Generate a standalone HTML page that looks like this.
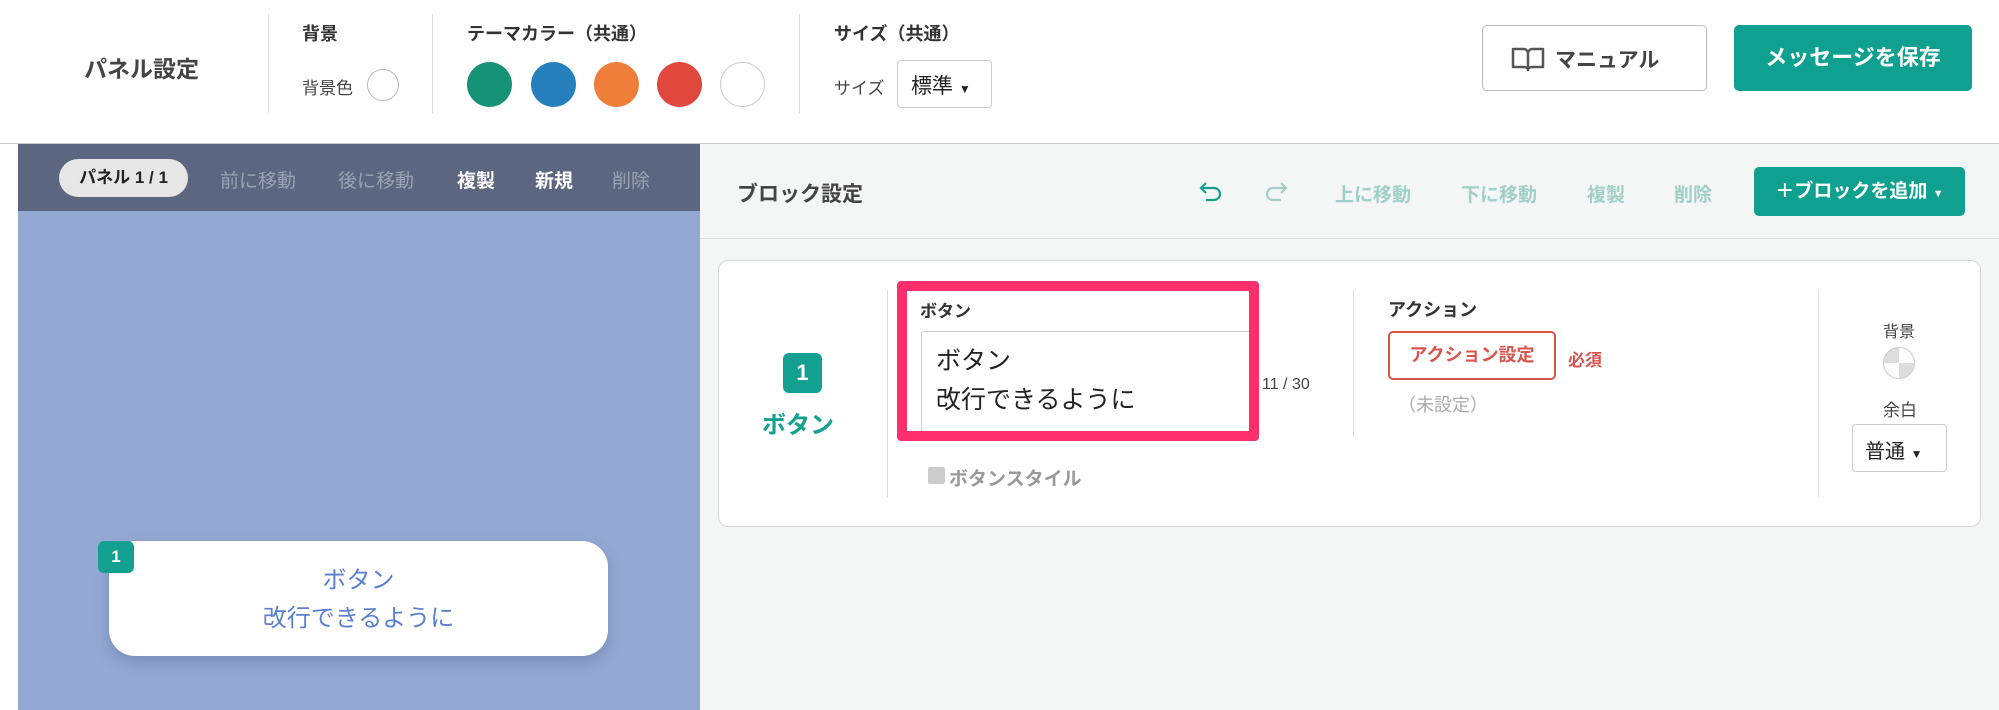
<!DOCTYPE html>
<html><head><meta charset="utf-8"><style>
*{box-sizing:border-box;margin:0;padding:0}
body{width:1999px;height:710px;overflow:hidden;background:#fff;font-family:"Liberation Sans","Noto Sans CJK JP",sans-serif;color:#333;position:relative}
.a{position:absolute;white-space:nowrap}
.vl{position:absolute;width:1px;background:#ddd}
.c{position:absolute;border-radius:50%;width:45px;height:45px;top:62px}
.t{font-size:19px;font-weight:bold;color:#fff;top:166px}
.g{font-size:19px;font-weight:bold;color:#9fd0c8;top:180px}
</style></head><body>
<div class="a" style="left:84px;top:50px;font-size:23px;font-weight:bold;color:#444">パネル設定</div>
<div class="vl" style="left:268px;top:14px;height:99px"></div>
<div class="a" style="left:302px;top:20px;font-size:18px;font-weight:bold">背景</div>
<div class="a" style="left:302px;top:74px;font-size:17px;color:#444">背景色</div>
<div class="a" style="left:367px;top:69px;width:32px;height:32px;border:1px solid #bbb;border-radius:50%"></div>
<div class="vl" style="left:432px;top:14px;height:99px"></div>
<div class="a" style="left:467px;top:20px;font-size:18px;font-weight:bold">テーマカラー（共通）</div>
<div class="c" style="left:467px;background:#169277"></div>
<div class="c" style="left:531px;background:#2580bd"></div>
<div class="c" style="left:594px;background:#ee7e3a"></div>
<div class="c" style="left:657px;background:#e1483d"></div>
<div class="c" style="left:720px;border:1px solid #ccc"></div>
<div class="vl" style="left:799px;top:14px;height:99px"></div>
<div class="a" style="left:834px;top:20px;font-size:18px;font-weight:bold">サイズ（共通）</div>
<div class="a" style="left:834px;top:74px;font-size:17px;color:#444">サイズ</div>
<div class="a" style="left:897px;top:60px;width:95px;height:48px;border:1px solid #ccc;border-radius:4px;font-size:21px;padding:9px 0 0 13px;color:#222">標準 <span style="font-size:12px">▼</span></div>
<div class="a" style="left:1482px;top:25px;width:225px;height:66px;border:1px solid #bbb;border-radius:5px;font-size:21px;font-weight:bold;color:#444;padding:18px 0 0 28px">
<svg width="34" height="26" viewBox="0 0 34 26" style="vertical-align:-5px;margin-right:10px"><path d="M2 3h11c2 0 4 2 4 4v17c0-2-2-3-4-3H2zM32 3H21c-2 0-4 2-4 4v17c0-2 2-3 4-3h11z" fill="none" stroke="#555" stroke-width="2.5" stroke-linejoin="round"/></svg>マニュアル</div>
<div class="a" style="left:1734px;top:25px;width:238px;height:66px;background:#0fa090;border-radius:5px;font-size:22px;font-weight:bold;color:#fff;text-align:center;line-height:66px">メッセージを保存</div>
<div class="a" style="left:0;top:143px;width:1999px;height:1px;background:#ccc"></div>
<div class="a" style="left:18px;top:144px;width:682px;height:67px;background:#5c6680"></div>
<div class="a" style="left:18px;top:211px;width:682px;height:499px;background:#93a9d3"></div>
<div class="a" style="left:59px;top:159px;width:129px;height:38px;border-radius:19px;background:#e6e6e6;font-size:17px;font-weight:bold;color:#222;text-align:center;line-height:38px">パネル 1 / 1</div>
<div class="a" style="left:220px;top:166px;font-size:19px;color:#9aa2b5">前に移動</div>
<div class="a" style="left:338px;top:166px;font-size:19px;color:#9aa2b5">後に移動</div>
<div class="a t" style="left:457px">複製</div>
<div class="a t" style="left:535px">新規</div>
<div class="a" style="left:612px;top:166px;font-size:19px;color:#9aa2b5">削除</div>
<div class="a" style="left:109px;top:541px;width:499px;height:115px;background:#fff;border-radius:26px;box-shadow:0 6px 14px rgba(60,80,120,.3);text-align:center;color:#5b7fd0;font-size:24px;line-height:38px;padding-top:21px">ボタン<br>改行できるように</div>
<div class="a" style="left:98px;top:541px;width:36px;height:32px;background:#14a091;border-radius:6px;color:#fff;font-weight:bold;font-size:17px;text-align:center;line-height:32px">1</div>
<div class="a" style="left:700px;top:144px;width:1299px;height:566px;background:#f4f5f5"></div>
<div class="a" style="left:700px;top:238px;width:1299px;height:1px;background:#ddd"></div>
<div class="a" style="left:737px;top:178px;font-size:21px;font-weight:bold;color:#444">ブロック設定</div>
<svg class="a" style="left:1198px;top:180px" width="26" height="26" viewBox="0 0 26 26"><path d="M4 8h12a6 6 0 0 1 0 12h-8M8 3L3 8l5 5" fill="none" stroke="#14a091" stroke-width="2.2"/></svg>
<svg class="a" style="left:1263px;top:180px" width="26" height="26" viewBox="0 0 26 26"><path d="M22 8H10a6 6 0 0 0 0 12h8M18 3l5 5-5 5" fill="none" stroke="#9fd0c8" stroke-width="2.2"/></svg>
<div class="a g" style="left:1335px">上に移動</div>
<div class="a g" style="left:1461px">下に移動</div>
<div class="a g" style="left:1587px">複製</div>
<div class="a g" style="left:1674px">削除</div>
<div class="a" style="left:1754px;top:167px;width:211px;height:49px;background:#0fa090;border-radius:5px;color:#fff;font-weight:bold;font-size:19px;text-align:center;line-height:49px">＋ブロックを追加 <span style="font-size:11px">▼</span></div>
<div class="a" style="left:718px;top:260px;width:1263px;height:267px;background:#fff;border:1px solid #d5d5d5;border-radius:10px"></div>
<div class="a" style="left:783px;top:353px;width:39px;height:40px;background:#14a091;border-radius:6px;color:#fff;font-weight:bold;font-size:22px;text-align:center;line-height:40px">1</div>
<div class="a" style="left:762px;top:405px;font-size:24px;font-weight:bold;color:#14a091">ボタン</div>
<div class="vl" style="left:887px;top:290px;height:207px"></div>
<div class="a" style="left:921px;top:331px;width:338px;height:105px;border:1px solid #ccc;border-radius:3px;font-size:25px;color:#222;padding:10px 0 0 14px;line-height:39px">ボタン<br>改行できるように</div>
<div class="a" style="left:897px;top:281px;width:362px;height:160px;border:10px solid #ff2f6e;border-radius:4px"></div>
<div class="a" style="left:920px;top:297px;font-size:17px;font-weight:bold;color:#333">ボタン</div>
<div class="a" style="left:1262px;top:376px;font-size:16px;color:#444">11 / 30</div>
<div class="a" style="left:928px;top:467px;width:17px;height:17px;background:#ccc;border-radius:2px"></div>
<div class="a" style="left:949px;top:464px;font-size:19px;font-weight:bold;color:#999">ボタンスタイル</div>
<div class="vl" style="left:1353px;top:290px;height:147px"></div>
<div class="a" style="left:1388px;top:296px;font-size:18px;font-weight:bold;color:#333">アクション</div>
<div class="a" style="left:1388px;top:331px;width:168px;height:49px;border:2px solid #d9534f;border-radius:5px;color:#d9534f;font-weight:bold;font-size:18px;text-align:center;line-height:45px">アクション設定</div>
<div class="a" style="left:1568px;top:346px;font-size:17px;font-weight:bold;color:#d9534f">必須</div>
<div class="a" style="left:1398px;top:391px;font-size:18px;color:#aaa">（未設定）</div>
<div class="vl" style="left:1818px;top:290px;height:207px"></div>
<div class="a" style="left:1883px;top:318px;font-size:16px;color:#444">背景</div>
<div class="a" style="left:1883px;top:347px;width:32px;height:32px;border-radius:50%;border:1px solid #ccc;background:conic-gradient(#fff 0 90deg,#ddd 90deg 180deg,#fff 180deg 270deg,#ddd 270deg)"></div>
<div class="a" style="left:1883px;top:396px;font-size:17px;color:#444">余白</div>
<div class="a" style="left:1852px;top:424px;width:95px;height:48px;border:1px solid #ccc;border-radius:4px;font-size:20px;padding:10px 0 0 12px;color:#222">普通 <span style="font-size:12px">▼</span></div>
</body></html>
